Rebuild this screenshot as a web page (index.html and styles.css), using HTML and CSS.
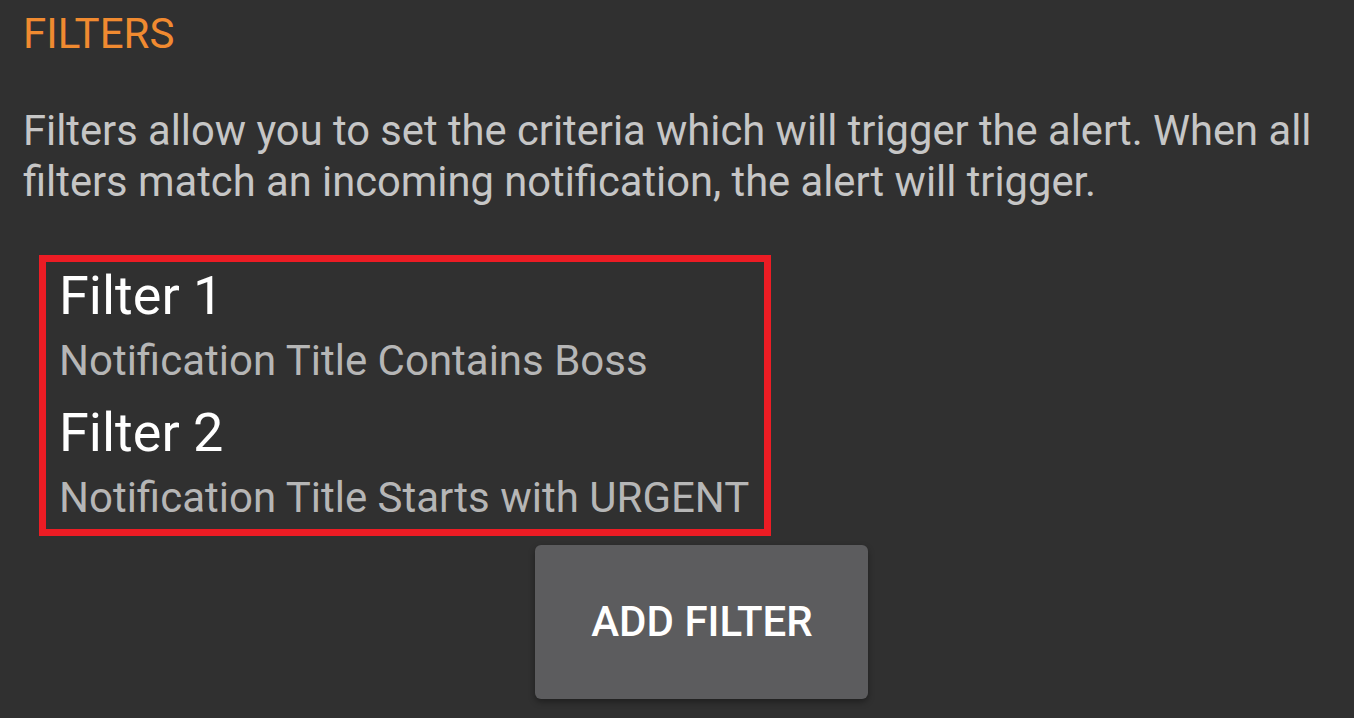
FILE: index.html
```html
<!DOCTYPE html>
<html lang="en">
<head>
<meta charset="utf-8">
<title>Filters</title>
<link rel="stylesheet" href="styles.css">
</head>
<body>
<main class="page">
  <h1 class="section-title">FILTERS</h1>
  <p class="description">Filters allow you to set the criteria which will trigger the alert. When all filters match an incoming notification, the alert will trigger.</p>
  <ul class="filter-list">
    <li class="filter-item">
      <div class="filter-name">Filter 1</div>
      <div class="filter-rule">Notification Title Contains Boss</div>
    </li>
    <li class="filter-item">
      <div class="filter-name">Filter 2</div>
      <div class="filter-rule">Notification Title Starts with URGENT</div>
    </li>
  </ul>
  <div class="actions">
    <button class="add-button" type="button">ADD FILTER</button>
  </div>
</main>
</body>
</html>
```
FILE: styles.css
```css
html, body {
  margin: 0;
  padding: 0;
  background: #303030;
}
body {
  font-family: Roboto, "Noto Sans", sans-serif;
  width: 1354px;
  height: 718px;
  overflow: hidden;
}
.page {
  padding: 9px 0 0 23px;
}
.section-title {
  margin: 0;
  font-size: 42px;
  font-weight: 400;
  line-height: 50px;
  color: #f08a30;
}
.description {
  margin: 47px 0 0;
  font-size: 41.7px;
  line-height: 50.5px;
  color: #c6c6c6;
  width: 1320px;
}
.filter-list {
  list-style: none;
  margin: 48px 0 0 16px;
  padding: 3.5px 0 5.5px 13px;
  width: 705px;
  border: 7.5px solid #ec1c24;
  display: flex;
  flex-direction: column;
  gap: 17.5px;
}
.filter-name {
  font-size: 54px;
  line-height: 60px;
  color: #ffffff;
}
.filter-rule {
  margin-top: 10.2px;
  font-size: 42px;
  line-height: 50px;
  color: #b6b6b6;
}
.actions {
  margin: 9px 0 0 512px;
}
.add-button {
  width: 333px;
  height: 154px;
  border: none;
  border-radius: 6px;
  background: #5c5c5e;
  color: #ffffff;
  font-family: Roboto, "Noto Sans", sans-serif;
  font-size: 42px;
  font-weight: 500;
  box-shadow: 0 3px 6px rgba(0, 0, 0, 0.35);
  padding: 0 0 0 1px;
}
```
